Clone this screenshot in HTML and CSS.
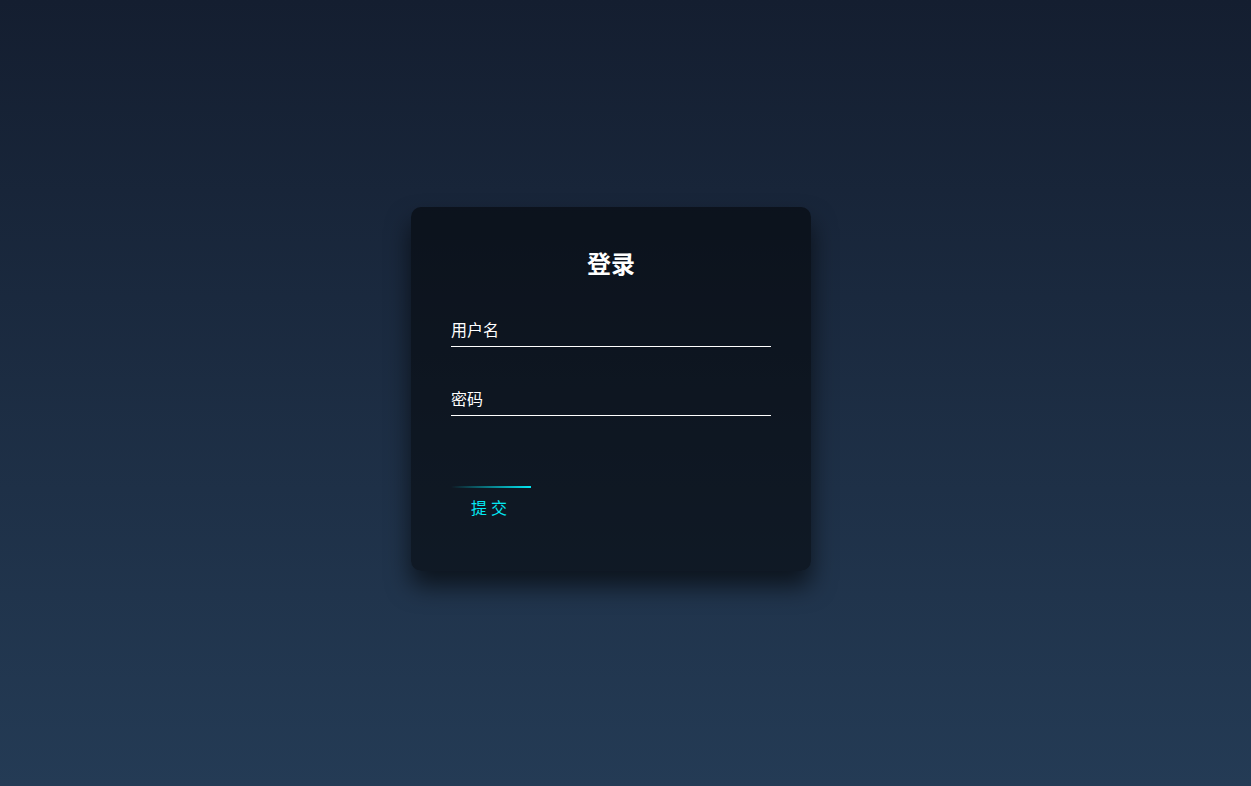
FILE: index.html
```html
<!DOCTYPE html>
<html lang="zh-CN">
<head>
<meta charset="utf-8">
<title>登录</title>
<link rel="stylesheet" href="styles.css">
</head>
<body>
<div class="page">
  <div class="login-box">
    <h2 class="title">登录</h2>
    <form class="form">
      <div class="user-box">
        <input class="field" type="text" required>
        <label class="label">用户名</label>
      </div>
      <div class="user-box">
        <input class="field" type="password" required>
        <label class="label">密码</label>
      </div>
      <a class="submit" href="#"><span class="line"></span>提交</a>
    </form>
  </div>
</div>
</body>
</html>
```
FILE: styles.css
```css
* { box-sizing: border-box; }
html, body {
  margin: 0;
  padding: 0;
  height: 100%;
}
body {
  font-family: "Noto Sans CJK SC", "Noto Sans", sans-serif;
  background: linear-gradient(#141e30, #243b55);
  min-height: 786px;
}
.page {
  display: flex;
  justify-content: center;
  padding: 207px 29px 0 0;
}
.login-box {
  width: 400px;
  padding: 40px 40px 43px;
  background: rgba(0, 0, 0, 0.5);
  box-shadow: 0 15px 25px rgba(0, 0, 0, 0.6);
  border-radius: 10px;
}
.title {
  margin: 0 0 31px;
  padding: 0;
  color: #fff;
  text-align: center;
  font-size: 24px;
  line-height: 32px;
  font-weight: 700;
}
.form { margin: 0; }
.user-box {
  position: relative;
}
.field {
  display: block;
  width: 100%;
  padding: 10px 0;
  font-family: inherit;
  font-size: 16px;
  line-height: 16px;
  height: 37px;
  color: #fff;
  margin: 0 0 32px;
  border: none;
  border-bottom: 1px solid #fff;
  outline: none;
  background: transparent;
}
.label {
  position: absolute;
  top: 0;
  left: 0;
  padding: 10px 0;
  font-size: 16px;
  line-height: 18px;
  color: #fff;
  pointer-events: none;
}
.submit {
  position: relative;
  display: block;
  width: max-content;
  margin-top: 70px;
  padding: 10px 20px;
  color: #03e9f4;
  font-size: 16px;
  line-height: 22px;
  letter-spacing: 4px;
  text-decoration: none;
  overflow: hidden;
}
.line {
  position: absolute;
  top: 0;
  left: 0;
  width: 100%;
  height: 2px;
  background: linear-gradient(90deg, transparent, #03e9f4);
}
```
